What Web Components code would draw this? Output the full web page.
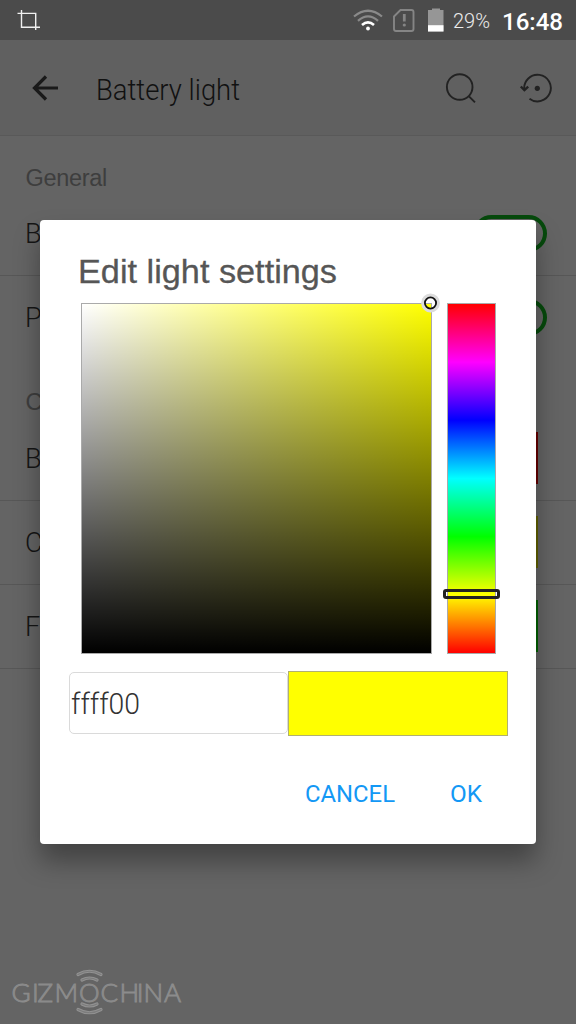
<!DOCTYPE html>
<html lang="en">
<head>
<meta charset="utf-8">
<title>Battery light</title>
<style>
html,body{margin:0;padding:0;height:100%;overflow:hidden;background:#646464}
body{font-family:Roboto,"Liberation Sans",sans-serif}
</style>
</head>
<body>
<light-app></light-app>
<script>
const define = (name, html, setup) => customElements.define(name, class extends HTMLElement {
  constructor() {
    super();
    const t = document.createElement('template');
    t.innerHTML = html;
    this.attachShadow({ mode: 'open' }).appendChild(t.content.cloneNode(true));
  }
  connectedCallback() { if (setup) setup.call(this, this.shadowRoot); }
});

/* Single line of text condensed or widened to the "w" attribute. */
define('fit-text', `<style>
:host{display:block;white-space:nowrap;line-height:1}
span{display:inline-block;transform-origin:0 50%}
</style><span><slot></slot></span>`, function (root) {
  const s = root.querySelector('span'), w = +this.getAttribute('w');
  if (!w) return;
  this.style.width = w + 'px';
  s.style.transform = `scaleX(${w / s.getBoundingClientRect().width})`;
});

define('status-bar', `<style>
:host{display:flex;align-items:center;height:40px;background:#4b4b4b;color:#fff;box-sizing:border-box;padding:0 13px 0 17px}
svg{display:block;flex:none}
.gap{flex:1}
.pct{font-size:20px;font-weight:300;color:#ececec;margin:2px 0 0 9px}
.time{font-size:24px;font-weight:500;margin:3px 0 0 12px}
</style>
<svg width="24" height="24" viewBox="0 0 24 24" fill="none" stroke="#f0f0f0" stroke-width="1.400"><path d="M4.500 2v17.200H23M.500 5.400h18.200V22"/></svg>
<div class="gap"></div>
<svg width="30" height="24" viewBox="0 0 30 24" fill="none" stroke-width="2.200"><path d="M1 8.500Q15-3 29 8.500" stroke="#8a8a8a"/><path d="M5 12.800q10-8.800 20 0" stroke="#8a8a8a" stroke-width="2.300"/><path d="M9 17q6-5.400 12 0" stroke="#fff" stroke-width="2.600"/><circle cx="15" cy="20.500" r="1.900" fill="#fff"/></svg>
<svg style="margin-left:10px" width="22" height="24" viewBox="0 0 22 24" fill="none" stroke="#858585" stroke-width="1.900"><path d="M7.500 2H18.500Q20.500 2 20.500 4V21Q20.500 23 18.500 23H3Q1 23 1 21V8.500Z"/><path d="M11.300 6v7.500" stroke-width="2.800"/><circle cx="11.300" cy="17" r="1.600" fill="#858585" stroke="none"/></svg>
<svg style="margin-left:13px" width="16" height="24" viewBox="0 0 16 24"><path d="M0 2H4V0.500H12V2H15.500V23.500H0Z" fill="#969696"/><path d="M0 17.200H15.500V23.500H0Z" fill="#fff"/></svg>
<fit-text class="pct" w="37">29%</fit-text><fit-text class="time" w="61">16:48</fit-text>`);

define('title-bar', `<style>
:host{display:flex;align-items:center;height:96px;box-sizing:border-box;background:#606060;border-bottom:1px solid #595959;padding:0 24px 0 31px;color:#111}
svg{display:block;flex:none}
fit-text{font-size:30px;font-weight:300;margin:5px 0 0 37px}
.gap{flex:1}
</style>
<svg width="28" height="26" viewBox="0 0 28 26" fill="none" stroke="#1a1a1a" stroke-width="3.200"><path d="M15 1.500 3.500 13 15 24.500M3.500 13H27"/></svg>
<fit-text w="144"><slot></slot></fit-text>
<div class="gap"></div>
<svg width="32" height="32" viewBox="0 0 32 32" fill="none" stroke="#222" stroke-width="1.900"><circle cx="14.700" cy="15" r="12.800"/><path d="m24 24.300 6 6"/></svg>
<svg style="margin-left:41px" width="34" height="32" viewBox="0 0 34 32" fill="none" stroke="#222" stroke-width="1.900"><path d="M6.300 17.500A13.300 13.300 0 1 1 11.500 26.700"/><path d="M2.800 14.500l3.600 3.600 3.800-3.500" stroke-width="2.400"/><circle cx="19.300" cy="16.300" r="2.600" fill="#222" stroke="none"/></svg>`);

define('section-label', `<style>
:host{display:block;height:56px;box-sizing:border-box;padding:31px 0 0 25.500px;color:#3e3e3e;font:23.500px "Liberation Sans",sans-serif;letter-spacing:-.3px}
</style><fit-text><slot></slot></fit-text>`);

define('setting-row', `<style>
:host{display:flex;align-items:center;height:84px;box-sizing:border-box;border-bottom:1px solid #575757;padding:1px 0 0 25px;font-size:27px;font-weight:300;color:#151515;justify-content:space-between}
:host([plain]){border-bottom-color:transparent}
</style><span><slot></slot></span><slot name="control"></slot>`);

define('toggle-switch', `<style>
:host{display:block;width:74px;height:37px;box-sizing:border-box;border:4.500px solid #064a0c;border-radius:19px;margin:-1px 29px 0 0}
</style>`);

define('color-chip', `<style>
:host{display:block;width:52px;height:52px;margin:-2px 38px 0 0;background:var(--chip)}
</style>`);

define('sv-picker', `<style>
:host{display:block;position:relative;width:351px;height:351px;box-sizing:border-box;border:1px solid #aaa;background:linear-gradient(to bottom,transparent,#000),linear-gradient(to right,#fff,#ff0)}
svg{position:absolute;left:339px;top:-11px}
</style><svg width="20" height="20" viewBox="0 0 20 20" fill="none"><circle cx="9.500" cy="10" r="7.600" stroke="#dcdcdc" stroke-width="3.600"/><circle cx="9.500" cy="10" r="5.600" stroke="#111" stroke-width="1.800"/></svg>`);

define('hue-picker', `<style>
:host{display:block;position:relative;width:49px;height:351px;box-sizing:border-box;border:1px solid #aaa;background:linear-gradient(#f00,#f0f,#00f,#0ff,#0f0,#ff0,#f00)}
i{position:absolute;left:-5px;top:285px;width:57px;height:10px;box-sizing:border-box;border:3px solid #222;border-radius:3px}
</style><i></i>`);

define('hex-field', `<style>
:host{display:flex;align-items:center;width:219px;height:62px;box-sizing:border-box;border:1.500px solid #dadada;border-radius:5px;padding:2px 0 0 1px;font-size:30px;font-weight:300;color:#333;background:#fff}
</style><fit-text w="69"><slot></slot></fit-text>`);

define('light-dialog', `<style>
:host{display:flex;flex-direction:column;position:absolute;left:40px;top:220px;width:496px;height:624px;box-sizing:border-box;background:#fff;border-radius:4px;box-shadow:0 17px 26px rgba(0,0,0,.34)}
h1{margin:35px 0 0 38px;height:48px;font:33px "Liberation Sans",sans-serif;color:#565656;-webkit-text-stroke:.3px #565656}
.pick{display:flex;gap:15px;padding-left:41px}
.value{display:flex;align-items:center;padding-left:29px;margin-top:17px}
hex-field{margin-top:-1px}
.sw{width:220px;height:65px;box-sizing:border-box;border:1px solid #b0b070;background:#ff0}
.act{display:flex;margin:46px 0 0 265px;gap:55px;color:#1398f5;font-size:24px}
</style>
<h1><fit-text w="259">Edit light settings</fit-text></h1>
<div class="pick"><sv-picker></sv-picker><hue-picker></hue-picker></div>
<div class="value"><hex-field>ffff00</hex-field><div class="sw"></div></div>
<div class="act"><fit-text w="90">CANCEL</fit-text><fit-text w="32">OK</fit-text></div>`);

define('brand-mark', `<style>
:host{display:block;position:absolute;left:8px;top:958px}
svg{display:block;overflow:visible}
text{font-family:Lato,sans-serif;font-size:26px;font-weight:300}
</style>
<svg width="220" height="66" viewBox="0 -6 220 66" fill="#848484" stroke="#8c8c8c" stroke-width=".9">
<text x="3.500 24 29.500 46.500 71 92.500 111.500 128.700 135.500 156" y="37.500">GIZMOCHINA</text>
<g fill="none" stroke="#929292" stroke-width="3.200" stroke-linecap="round"><path d="M70 10.500q11.500-6.500 23 0M74 16q7.500-4 15 0M74 40q7.500 4 15 0M70 45.500q11.500 6.500 23 0"/></g>
<g fill="none" stroke="#7c7c7c" stroke-width="1.200" stroke-linecap="round"><path d="M70 10.500q11.500-6.500 23 0M74 16q7.500-4 15 0M74 40q7.500 4 15 0M70 45.500q11.500 6.500 23 0"/></g>
</svg>`);

define('light-app', `<style>
:host{display:block;position:relative;width:576px;height:1024px;overflow:hidden;background:#646464}
</style>
<status-bar></status-bar>
<title-bar>Battery light</title-bar>
<section-label>General</section-label>
<setting-row>B<toggle-switch slot="control"></toggle-switch></setting-row>
<setting-row plain>P<toggle-switch slot="control"></toggle-switch></setting-row>
<section-label style="height:57px">C</section-label>
<setting-row>B<color-chip slot="control" style="--chip:#600"></color-chip></setting-row>
<setting-row>C<color-chip slot="control" style="--chip:#606000"></color-chip></setting-row>
<setting-row>F<color-chip slot="control" style="--chip:#006000"></color-chip></setting-row>
<light-dialog></light-dialog>
<brand-mark></brand-mark>`);
</script>
</body>
</html>
